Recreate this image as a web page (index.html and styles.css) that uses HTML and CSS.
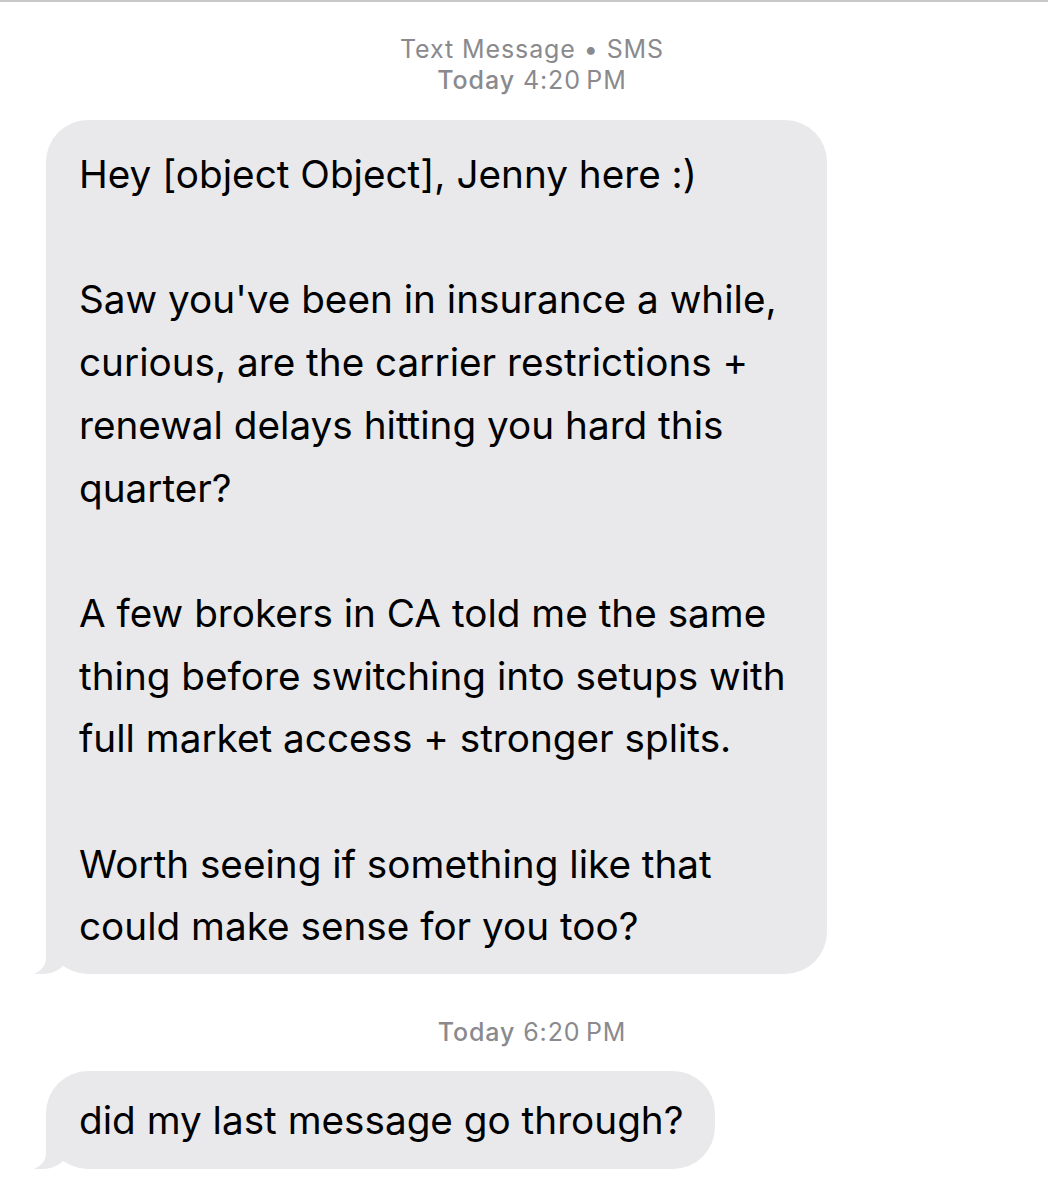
FILE: index.html
```html
<!DOCTYPE html>
<html lang="en">
<head>
  <meta charset="UTF-8">
  <meta name="viewport" content="width=device-width, initial-scale=1.0">
  <title>Messages</title>
  <link rel="stylesheet" href="styles.css">
</head>
<body>
  <div class="thread">
    <!-- Conversation header -->
    <div class="stamp">
      <div>Text Message &bull; SMS</div>
      <div><b>Today</b> 4:20&#8239;PM</div>
    </div>

    <div class="bubble first">
      <p>Hey [object Object], Jenny here :)</p>
      <p>Saw you've been in insurance a while,<br>curious, are the carrier restrictions +<br>renewal delays hitting you hard this<br>quarter?</p>
      <p>A few brokers in CA told me the same<br>thing before switching into setups with<br>full market access + stronger splits.</p>
      <p>Worth seeing if something like that<br>could make sense for you too?</p>
    </div>

    <div class="stamp later">
      <div><b>Today</b> 6:20&#8239;PM</div>
    </div>

    <div class="bubble second">
      <p>did my last message go through?</p>
    </div>
  </div>
</body>
</html>
```

FILE: styles.css
```css
body {
  margin: 0;
  background-color: #ffffff;
  font-family: Inter, "Noto Sans", sans-serif;
  border-top: 2px solid #c9c9cb;
}
.thread {
  display: flex;
  flex-direction: column;
  align-items: flex-start;
  padding: 32px 0 0 46px;
}
.stamp {
  align-self: center;
  margin-left: -30px;
  width: 1048px;
  text-align: center;
  color: #8a8a8e;
  font-size: 25px;
  letter-spacing: 0.9px;
  line-height: 31px;
}
.stamp b {
  font-weight: 500;
}
.stamp.later {
  margin-top: 43px;
}
.bubble {
  position: relative;
  background-color: #e9e9eb;
  color: #000000;
  font-size: 38.7px;
  line-height: 62.7px;
  border-radius: 42px;
  white-space: nowrap;
}
.bubble p {
  margin: 0 0 62.7px 0;
}
.bubble p:last-child {
  margin-bottom: 0;
}
.first {
  margin-top: 24px;
  padding: 23px 41px 16px 33px;
}
.second {
  margin-top: 23px;
  padding: 18px 31px 17px 33px;
}

/* Tail of the bubble */
.bubble:before,
.bubble:after {
  content: "";
  position: absolute;
  bottom: 0;
  height: 40px;
}
.bubble:before {
  left: -11px;
  width: 34px;
  background-color: #e9e9eb;
  border-bottom-right-radius: 26px 22px;
}
.bubble:after {
  left: -42px;
  width: 42px;
  background-color: #ffffff;
  border-bottom-right-radius: 16px;
}
```
